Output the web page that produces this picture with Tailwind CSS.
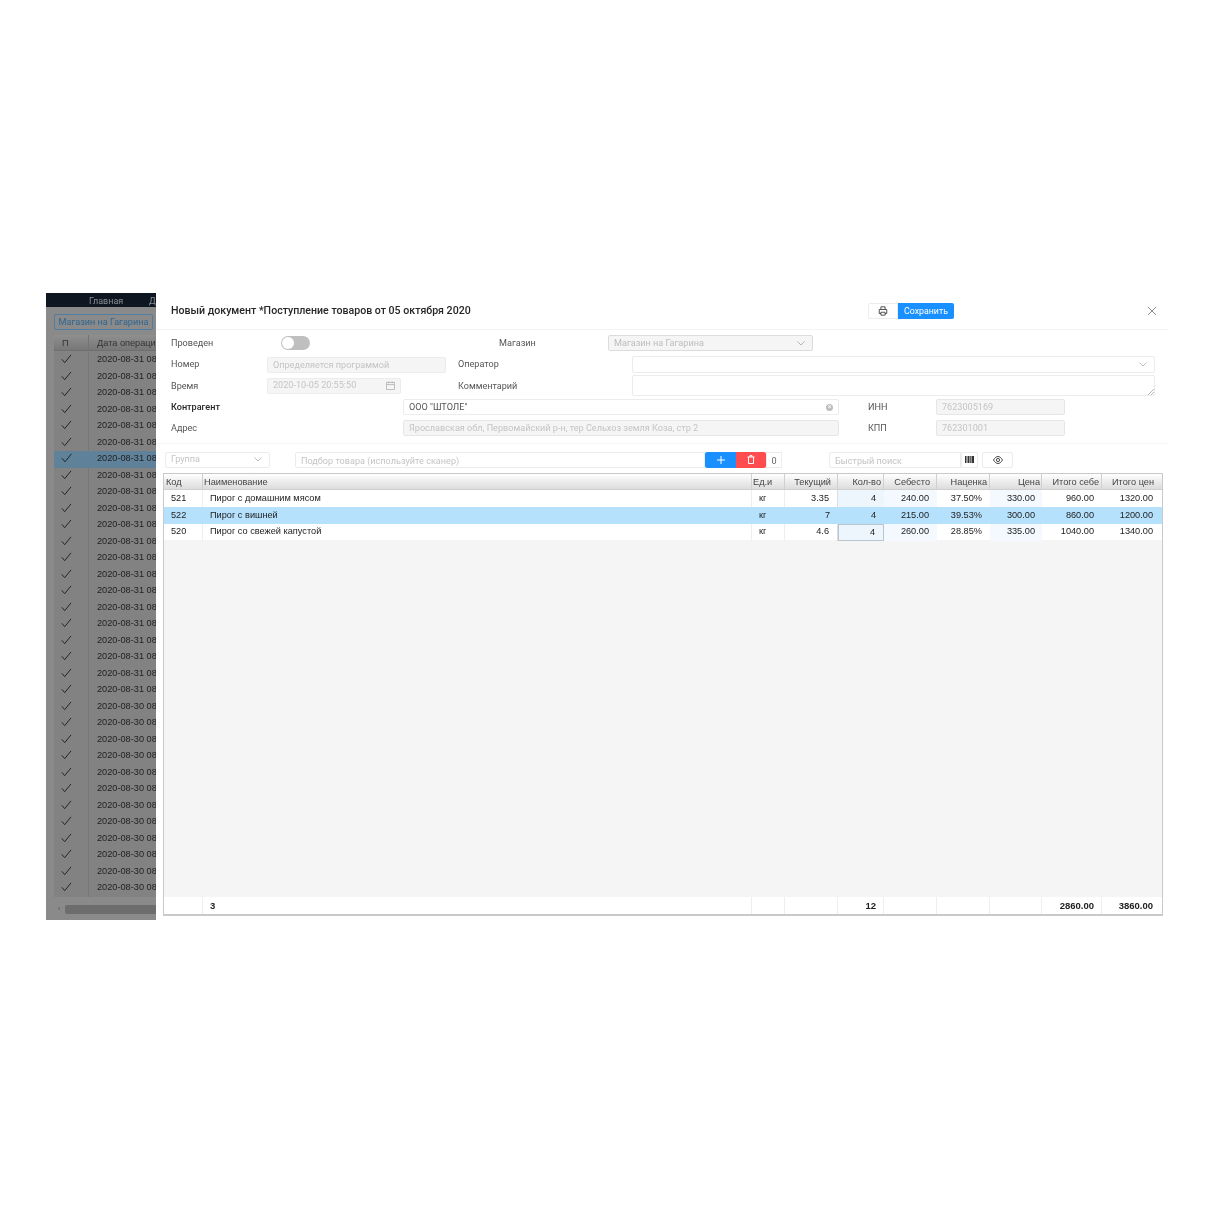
<!DOCTYPE html>
<html lang="ru">
<head>
<meta charset="utf-8">
<title>Новый документ</title>
<script src="https://cdn.jsdelivr.net/npm/@tailwindcss/browser@4"></script>
</head>
<body class="bg-white">
<div class="w-[1214px] h-[1214px] pt-[293px] pl-[46px] flex items-start overflow-hidden blur-[0.3px] font-['Liberation_Sans',sans-serif]">

<!-- dimmed page behind the dialog -->
<div class="relative w-[110px] h-[627px] bg-[#8a8a8a] overflow-hidden shrink-0">
  <div class="h-[14px] bg-[#0d1621] text-[9px] leading-[16px] text-[#8b8f94] font-['Roboto',sans-serif] flex">
    <span class="ml-[43px] w-[60px] shrink-0">Главная</span><span>Д</span>
  </div>
  <div class="mt-[7px] ml-[8px] w-[99px] h-[16px] rounded-[2px] border border-[#4f7da3] text-[#2f6690] text-[9.1px] leading-[14px] text-center font-['Roboto',sans-serif] whitespace-nowrap">Магазин на Гагарина</div>
  <div class="mt-[5px] ml-[8px] h-[16px] flex text-[9.2px] leading-[16px] text-[#333] bg-gradient-to-b from-[#8f8f8f] to-[#777] border-b border-[#6f6f6f]">
    <span class="w-[35px] shrink-0 pl-[8px] border-r border-[#747474]">П</span><span class="pl-[8px] whitespace-nowrap">Дата операции</span>
  </div>
  <div class="ml-[8px] pt-[1px] text-[9.2px] leading-[16.5px] text-[#222] bg-[#828282]">
    <div class="h-[16.5px] flex items-center"><svg class="w-[35px] h-[16.5px] shrink-0 border-r border-[#777]" viewBox="0 0 35 16" fill="none" stroke="#222" stroke-width="1"><path d="M8 7l3 3.500 6.500-8"/></svg><span class="pl-[8px] pb-[2px] whitespace-nowrap">2020-08-31 08:00:00</span></div>
    <div class="h-[16.5px] flex items-center"><svg class="w-[35px] h-[16.5px] shrink-0 border-r border-[#777]" viewBox="0 0 35 16" fill="none" stroke="#222" stroke-width="1"><path d="M8 7l3 3.500 6.500-8"/></svg><span class="pl-[8px] pb-[2px] whitespace-nowrap">2020-08-31 08:00:00</span></div>
    <div class="h-[16.5px] flex items-center"><svg class="w-[35px] h-[16.5px] shrink-0 border-r border-[#777]" viewBox="0 0 35 16" fill="none" stroke="#222" stroke-width="1"><path d="M8 7l3 3.500 6.500-8"/></svg><span class="pl-[8px] pb-[2px] whitespace-nowrap">2020-08-31 08:00:00</span></div>
    <div class="h-[16.5px] flex items-center"><svg class="w-[35px] h-[16.5px] shrink-0 border-r border-[#777]" viewBox="0 0 35 16" fill="none" stroke="#222" stroke-width="1"><path d="M8 7l3 3.500 6.500-8"/></svg><span class="pl-[8px] pb-[2px] whitespace-nowrap">2020-08-31 08:00:00</span></div>
    <div class="h-[16.5px] flex items-center"><svg class="w-[35px] h-[16.5px] shrink-0 border-r border-[#777]" viewBox="0 0 35 16" fill="none" stroke="#222" stroke-width="1"><path d="M8 7l3 3.500 6.500-8"/></svg><span class="pl-[8px] pb-[2px] whitespace-nowrap">2020-08-31 08:00:00</span></div>
    <div class="h-[16.5px] flex items-center"><svg class="w-[35px] h-[16.5px] shrink-0 border-r border-[#777]" viewBox="0 0 35 16" fill="none" stroke="#222" stroke-width="1"><path d="M8 7l3 3.500 6.500-8"/></svg><span class="pl-[8px] pb-[2px] whitespace-nowrap">2020-08-31 08:00:00</span></div>
    <div class="h-[16.5px] flex items-center bg-[#5f8199]"><svg class="w-[35px] h-[16.5px] shrink-0" viewBox="0 0 35 16" fill="none" stroke="#222" stroke-width="1"><path d="M8 7l3 3.500 6.500-8"/></svg><span class="pl-[8px] pb-[2px] whitespace-nowrap">2020-08-31 08:00:00</span></div>
    <div class="h-[16.5px] flex items-center"><svg class="w-[35px] h-[16.5px] shrink-0 border-r border-[#777]" viewBox="0 0 35 16" fill="none" stroke="#222" stroke-width="1"><path d="M8 7l3 3.500 6.500-8"/></svg><span class="pl-[8px] pb-[2px] whitespace-nowrap">2020-08-31 08:00:00</span></div>
    <div class="h-[16.5px] flex items-center"><svg class="w-[35px] h-[16.5px] shrink-0 border-r border-[#777]" viewBox="0 0 35 16" fill="none" stroke="#222" stroke-width="1"><path d="M8 7l3 3.500 6.500-8"/></svg><span class="pl-[8px] pb-[2px] whitespace-nowrap">2020-08-31 08:00:00</span></div>
    <div class="h-[16.5px] flex items-center"><svg class="w-[35px] h-[16.5px] shrink-0 border-r border-[#777]" viewBox="0 0 35 16" fill="none" stroke="#222" stroke-width="1"><path d="M8 7l3 3.500 6.500-8"/></svg><span class="pl-[8px] pb-[2px] whitespace-nowrap">2020-08-31 08:00:00</span></div>
    <div class="h-[16.5px] flex items-center"><svg class="w-[35px] h-[16.5px] shrink-0 border-r border-[#777]" viewBox="0 0 35 16" fill="none" stroke="#222" stroke-width="1"><path d="M8 7l3 3.500 6.500-8"/></svg><span class="pl-[8px] pb-[2px] whitespace-nowrap">2020-08-31 08:00:00</span></div>
    <div class="h-[16.5px] flex items-center"><svg class="w-[35px] h-[16.5px] shrink-0 border-r border-[#777]" viewBox="0 0 35 16" fill="none" stroke="#222" stroke-width="1"><path d="M8 7l3 3.500 6.500-8"/></svg><span class="pl-[8px] pb-[2px] whitespace-nowrap">2020-08-31 08:00:00</span></div>
    <div class="h-[16.5px] flex items-center"><svg class="w-[35px] h-[16.5px] shrink-0 border-r border-[#777]" viewBox="0 0 35 16" fill="none" stroke="#222" stroke-width="1"><path d="M8 7l3 3.500 6.500-8"/></svg><span class="pl-[8px] pb-[2px] whitespace-nowrap">2020-08-31 08:00:00</span></div>
    <div class="h-[16.5px] flex items-center"><svg class="w-[35px] h-[16.5px] shrink-0 border-r border-[#777]" viewBox="0 0 35 16" fill="none" stroke="#222" stroke-width="1"><path d="M8 7l3 3.500 6.500-8"/></svg><span class="pl-[8px] pb-[2px] whitespace-nowrap">2020-08-31 08:00:00</span></div>
    <div class="h-[16.5px] flex items-center"><svg class="w-[35px] h-[16.5px] shrink-0 border-r border-[#777]" viewBox="0 0 35 16" fill="none" stroke="#222" stroke-width="1"><path d="M8 7l3 3.500 6.500-8"/></svg><span class="pl-[8px] pb-[2px] whitespace-nowrap">2020-08-31 08:00:00</span></div>
    <div class="h-[16.5px] flex items-center"><svg class="w-[35px] h-[16.5px] shrink-0 border-r border-[#777]" viewBox="0 0 35 16" fill="none" stroke="#222" stroke-width="1"><path d="M8 7l3 3.500 6.500-8"/></svg><span class="pl-[8px] pb-[2px] whitespace-nowrap">2020-08-31 08:00:00</span></div>
    <div class="h-[16.5px] flex items-center"><svg class="w-[35px] h-[16.5px] shrink-0 border-r border-[#777]" viewBox="0 0 35 16" fill="none" stroke="#222" stroke-width="1"><path d="M8 7l3 3.500 6.500-8"/></svg><span class="pl-[8px] pb-[2px] whitespace-nowrap">2020-08-31 08:00:00</span></div>
    <div class="h-[16.5px] flex items-center"><svg class="w-[35px] h-[16.5px] shrink-0 border-r border-[#777]" viewBox="0 0 35 16" fill="none" stroke="#222" stroke-width="1"><path d="M8 7l3 3.500 6.500-8"/></svg><span class="pl-[8px] pb-[2px] whitespace-nowrap">2020-08-31 08:00:00</span></div>
    <div class="h-[16.5px] flex items-center"><svg class="w-[35px] h-[16.5px] shrink-0 border-r border-[#777]" viewBox="0 0 35 16" fill="none" stroke="#222" stroke-width="1"><path d="M8 7l3 3.500 6.500-8"/></svg><span class="pl-[8px] pb-[2px] whitespace-nowrap">2020-08-31 08:00:00</span></div>
    <div class="h-[16.5px] flex items-center"><svg class="w-[35px] h-[16.5px] shrink-0 border-r border-[#777]" viewBox="0 0 35 16" fill="none" stroke="#222" stroke-width="1"><path d="M8 7l3 3.500 6.500-8"/></svg><span class="pl-[8px] pb-[2px] whitespace-nowrap">2020-08-31 08:00:00</span></div>
    <div class="h-[16.5px] flex items-center"><svg class="w-[35px] h-[16.5px] shrink-0 border-r border-[#777]" viewBox="0 0 35 16" fill="none" stroke="#222" stroke-width="1"><path d="M8 7l3 3.500 6.500-8"/></svg><span class="pl-[8px] pb-[2px] whitespace-nowrap">2020-08-31 08:00:00</span></div>
    <div class="h-[16.5px] flex items-center"><svg class="w-[35px] h-[16.5px] shrink-0 border-r border-[#777]" viewBox="0 0 35 16" fill="none" stroke="#222" stroke-width="1"><path d="M8 7l3 3.500 6.500-8"/></svg><span class="pl-[8px] pb-[2px] whitespace-nowrap">2020-08-30 08:00:00</span></div>
    <div class="h-[16.5px] flex items-center"><svg class="w-[35px] h-[16.5px] shrink-0 border-r border-[#777]" viewBox="0 0 35 16" fill="none" stroke="#222" stroke-width="1"><path d="M8 7l3 3.500 6.500-8"/></svg><span class="pl-[8px] pb-[2px] whitespace-nowrap">2020-08-30 08:00:00</span></div>
    <div class="h-[16.5px] flex items-center"><svg class="w-[35px] h-[16.5px] shrink-0 border-r border-[#777]" viewBox="0 0 35 16" fill="none" stroke="#222" stroke-width="1"><path d="M8 7l3 3.500 6.500-8"/></svg><span class="pl-[8px] pb-[2px] whitespace-nowrap">2020-08-30 08:00:00</span></div>
    <div class="h-[16.5px] flex items-center"><svg class="w-[35px] h-[16.5px] shrink-0 border-r border-[#777]" viewBox="0 0 35 16" fill="none" stroke="#222" stroke-width="1"><path d="M8 7l3 3.500 6.500-8"/></svg><span class="pl-[8px] pb-[2px] whitespace-nowrap">2020-08-30 08:00:00</span></div>
    <div class="h-[16.5px] flex items-center"><svg class="w-[35px] h-[16.5px] shrink-0 border-r border-[#777]" viewBox="0 0 35 16" fill="none" stroke="#222" stroke-width="1"><path d="M8 7l3 3.500 6.500-8"/></svg><span class="pl-[8px] pb-[2px] whitespace-nowrap">2020-08-30 08:00:00</span></div>
    <div class="h-[16.5px] flex items-center"><svg class="w-[35px] h-[16.5px] shrink-0 border-r border-[#777]" viewBox="0 0 35 16" fill="none" stroke="#222" stroke-width="1"><path d="M8 7l3 3.500 6.500-8"/></svg><span class="pl-[8px] pb-[2px] whitespace-nowrap">2020-08-30 08:00:00</span></div>
    <div class="h-[16.5px] flex items-center"><svg class="w-[35px] h-[16.5px] shrink-0 border-r border-[#777]" viewBox="0 0 35 16" fill="none" stroke="#222" stroke-width="1"><path d="M8 7l3 3.500 6.500-8"/></svg><span class="pl-[8px] pb-[2px] whitespace-nowrap">2020-08-30 08:00:00</span></div>
    <div class="h-[16.5px] flex items-center"><svg class="w-[35px] h-[16.5px] shrink-0 border-r border-[#777]" viewBox="0 0 35 16" fill="none" stroke="#222" stroke-width="1"><path d="M8 7l3 3.500 6.500-8"/></svg><span class="pl-[8px] pb-[2px] whitespace-nowrap">2020-08-30 08:00:00</span></div>
    <div class="h-[16.5px] flex items-center"><svg class="w-[35px] h-[16.5px] shrink-0 border-r border-[#777]" viewBox="0 0 35 16" fill="none" stroke="#222" stroke-width="1"><path d="M8 7l3 3.500 6.500-8"/></svg><span class="pl-[8px] pb-[2px] whitespace-nowrap">2020-08-30 08:00:00</span></div>
    <div class="h-[16.5px] flex items-center"><svg class="w-[35px] h-[16.5px] shrink-0 border-r border-[#777]" viewBox="0 0 35 16" fill="none" stroke="#222" stroke-width="1"><path d="M8 7l3 3.500 6.500-8"/></svg><span class="pl-[8px] pb-[2px] whitespace-nowrap">2020-08-30 08:00:00</span></div>
    <div class="h-[16.5px] flex items-center"><svg class="w-[35px] h-[16.5px] shrink-0 border-r border-[#777]" viewBox="0 0 35 16" fill="none" stroke="#222" stroke-width="1"><path d="M8 7l3 3.500 6.500-8"/></svg><span class="pl-[8px] pb-[2px] whitespace-nowrap">2020-08-30 08:00:00</span></div>
    <div class="h-[16.5px] flex items-center"><svg class="w-[35px] h-[16.5px] shrink-0 border-r border-[#777]" viewBox="0 0 35 16" fill="none" stroke="#222" stroke-width="1"><path d="M8 7l3 3.500 6.500-8"/></svg><span class="pl-[8px] pb-[2px] whitespace-nowrap">2020-08-30 08:00:00</span></div>
  </div>
  <div class="absolute left-[8px] right-0 top-[611px] h-[16px] bg-[#8a8a8a]">
    <div class="h-[10px] flex items-center">
      <span class="w-[11px] pl-[4px] text-[7px] leading-[10px] text-[#555]">‹</span>
      <span class="h-[9px] flex-1 bg-[#6d6d6d] rounded-l-[2px]"></span>
    </div>
  </div>
</div>

<!-- dialog -->
<div class="w-[1012px] h-[640px] bg-white text-[9.1px] text-[#555] font-['Roboto',sans-serif]">
  <div class="h-[37px] flex items-center border-b border-[#f4f4f4] pl-[15px]">
    <span class="w-[697px] text-[10.6px] font-medium text-[#262626] whitespace-nowrap">Новый документ *Поступление товаров от 05 октября 2020</span>
    <span class="w-[30px] h-[16px] border border-[#ececec] rounded-l-[2px] flex items-center justify-center">
      <svg class="w-[10px] h-[10px]" viewBox="0 0 12 12" fill="none" stroke="#333" stroke-width="1"><path d="M3.500 4V1h5v3M3.500 9H1.500V4.200h9V9H8.500"/><path d="M3.500 7.500h5v3.500h-5z"/></svg>
    </span>
    <span class="w-[56px] h-[16px] bg-[#1890ff] rounded-r-[2px] text-white text-[8.8px] text-center leading-[17px]">Сохранить</span>
    <svg class="ml-[193px] w-[10px] h-[10px]" viewBox="0 0 10 10" stroke="#8c8c8c" stroke-width="1" fill="none"><path d="M1 1l8 8M9 1l-8 8"/></svg>
  </div>

  <div class="h-[114px] pt-[5px] border-b border-[#f6f6f6] relative">
    <div class="h-[16px] flex items-center">
      <span class="ml-[15px] w-[110px] pt-[2px]">Проведен</span>
      <span class="w-[29px] h-[14px] rounded-full bg-[#bfbfbf] p-[1px] flex"><span class="w-[12px] h-[12px] rounded-full bg-white"></span></span>
      <span class="ml-[189px] w-[109px] pt-[2px] text-[#555]">Магазин</span>
      <span class="w-[205px] h-[16px] rounded-[2px] border border-[#dcdcdc] bg-[#f5f5f5] pl-[5px] pr-[7px] flex items-center justify-between text-[#bdbdbd] leading-[15px]">Магазин на Гагарина<svg class="w-[8px] h-[5px]" viewBox="0 0 8 5" fill="none" stroke="#b5b5b5"><path d="M.5.5L4 4 7.500.5"/></svg></span>
    </div>
    <div class="mt-[5px] h-[17px] flex items-center">
      <span class="ml-[15px] w-[96px] pt-[1px]">Номер</span>
      <span class="w-[179px] h-[16px] rounded-[2px] border border-[#ececec] bg-[#f5f5f5] pl-[5px] text-[#c4c4c4] leading-[14px]">Определяется программой</span>
      <span class="ml-[12px] w-[174px] pt-[1px]">Оператор</span>
      <span class="w-[523px] h-[17px] rounded-[2px] border border-[#ececec] pr-[7px] flex items-center justify-end"><svg class="w-[8px] h-[5px]" viewBox="0 0 8 5" fill="none" stroke="#bdbdbd"><path d="M.5.5L4 4 7.500.5"/></svg></span>
    </div>
    <div class="mt-[2px] h-[21px] flex items-center">
      <span class="ml-[15px] w-[96px] pt-[2px]">Время</span>
      <span class="w-[134px] h-[16px] rounded-[2px] border border-[#ececec] bg-[#f5f5f5] pl-[5px] pr-[5px] flex items-center justify-between text-[#c4c4c4]">2020-10-05 20:55:50<svg class="w-[9px] h-[9px]" viewBox="0 0 10 10" fill="none" stroke="#b5b5b5"><path d="M.5 1.500h9v8h-9zM.5 4h9M3 .5v2M7 .5v2"/></svg></span>
      <span class="ml-[57px] w-[174px] pt-[2px]">Комментарий</span>
      <span class="relative w-[523px] h-[21px] rounded-[2px] border border-[#ececec]"><svg class="absolute right-0 bottom-0 w-[7px] h-[7px]" viewBox="0 0 7 7" stroke="#999" stroke-width=".7"><path d="M1 7l6-6M4 7l3-3"/></svg></span>
    </div>
    <div class="mt-[3px] h-[16px] flex items-center">
      <span class="ml-[15px] w-[232px] pt-[2px] text-[#262626] font-medium">Контрагент</span>
      <span class="w-[436px] h-[16px] rounded-[2px] border border-[#ececec] pl-[5px] pr-[5px] flex items-center justify-between text-[#555] leading-[15px]"><span class="pt-[1px]">ООО "ШТОЛЕ"</span><span class="w-[7px] h-[7px] rounded-full bg-[#bdbdbd] text-white text-[7px] leading-[7px] text-center">×</span></span>
      <span class="ml-[29px] w-[68px] pt-[2px]">ИНН</span>
      <span class="w-[129px] h-[16px] rounded-[2px] border border-[#e6e6e6] bg-[#f5f5f5] pl-[5px] text-[#c4c4c4] leading-[14px]">7623005169</span>
    </div>
    <div class="mt-[5px] h-[16px] flex items-center">
      <span class="ml-[15px] w-[232px] pt-[2px]">Адрес</span>
      <span class="w-[436px] h-[16px] rounded-[2px] border border-[#e6e6e6] bg-[#f5f5f5] pl-[5px] text-[#c4c4c4] leading-[14px] whitespace-nowrap">Ярославская обл, Первомайский р-н, тер Сельхоз земля Коза, стр 2</span>
      <span class="ml-[29px] w-[68px] pt-[2px]">КПП</span>
      <span class="w-[129px] h-[16px] rounded-[2px] border border-[#e6e6e6] bg-[#f5f5f5] pl-[5px] text-[#c4c4c4] leading-[14px]">762301001</span>
    </div>
  </div>

  <div class="mt-[7px] h-[17px] flex items-center pl-[9px] text-[#c4c4c4]">
    <span class="w-[105px] h-[16px] rounded-[2px] border border-[#ececec] pl-[5px] pr-[7px] flex items-center justify-between leading-[17px]"><span>Группа</span><svg class="w-[8px] h-[5px]" viewBox="0 0 8 5" fill="none" stroke="#bdbdbd"><path d="M.5.5L4 4 7.500.5"/></svg></span>
    <span class="ml-[25px] w-[410px] h-[16px] rounded-l-[2px] border border-[#ececec] pl-[5px] leading-[17px]">Подбор товара (используйте сканер)</span>
    <span class="w-[31px] h-[16px] bg-[#1890ff] rounded-l-[2px] flex items-center justify-center"><svg class="w-[8px] h-[8px]" viewBox="0 0 8 8" stroke="#fff"><path d="M4 0v8M0 4h8"/></svg></span>
    <span class="w-[30px] h-[16px] bg-[#ff4d4f] rounded-r-[2px] flex items-center justify-center"><svg class="w-[8px] h-[9px]" viewBox="0 0 8 9" fill="none" stroke="#fff"><path d="M.5 2h7M1.500 2v6.500h5V2M3 2V.5h2V2"/></svg></span>
    <span class="w-[16px] h-[16px] border border-[#ececec] text-[#666] text-center leading-[16px]">0</span>
    <span class="ml-[47px] w-[132px] h-[16px] rounded-l-[2px] border border-[#ececec] pl-[5px] leading-[17px]">Быстрый поиск</span>
    <span class="w-[17px] h-[16px] border border-[#ececec] flex items-center justify-center"><svg class="w-[9px] h-[7px]" viewBox="0 0 9 7" stroke="#333"><path d="M.5 0v7M2 0v7M3.500 0v7M5 0v7M6 0v7M7.500 0v7M8.500 0v7"/></svg></span>
    <span class="ml-[4px] w-[31px] h-[16px] rounded-[2px] border border-[#ececec] flex items-center justify-center"><svg class="w-[10px] h-[8px]" viewBox="0 0 10 8" fill="none" stroke="#333" stroke-width=".9"><path d="M.5 4C2 1.500 3.500.5 5 .5S8 1.500 9.500 4C8 6.500 6.500 7.500 5 7.500S2 6.500.5 4z"/><circle cx="5" cy="4" r="1.600"/></svg></span>
  </div>

  <div class="mt-[5px] ml-[7px] w-[1000px] h-[443px] border border-[#c9c9c9] border-b-2 bg-[#f5f5f5] flex flex-col justify-between font-['Liberation_Sans',sans-serif] text-[9.2px] text-[#222]">
    <div>
      <div class="h-[16px] grid grid-cols-[39px_549px_33px_53px_46px_53px_53px_52px_60px_60px] bg-gradient-to-b from-white to-[#dcdcdc] border-b border-[#cfcfcf] leading-[16px] text-[#444] whitespace-nowrap">
        <span class="pl-[2px] border-r border-[#d0d0d0]">Код</span>
        <span class="pl-[1px] border-r border-[#d0d0d0]">Наименование</span>
        <span class="pl-[1px] border-r border-[#d0d0d0]">Ед.и</span>
        <span class="pr-[6px] text-right border-r border-[#d0d0d0]">Текущий</span>
        <span class="pr-[2px] text-right border-r border-[#d0d0d0]">Кол-во</span>
        <span class="pr-[6px] text-right border-r border-[#d0d0d0]">Себесто</span>
        <span class="pr-[2px] text-right border-r border-[#d0d0d0]">Наценка</span>
        <span class="pr-[1px] text-right border-r border-[#d0d0d0]">Цена</span>
        <span class="pr-[2px] text-right border-r border-[#d0d0d0]">Итого себе</span>
        <span class="pr-[8px] text-right">Итого цен</span>
      </div>
      <div class="h-[17px] grid grid-cols-[39px_549px_33px_53px_46px_53px_53px_52px_60px_60px] bg-white leading-[16px]">
        <span class="pl-[7px] border-r border-[#eee]">521</span>
        <span class="pl-[7px] border-r border-[#eee]">Пирог с домашним мясом</span>
        <span class="pl-[7px] border-r border-[#eee]">кг</span>
        <span class="pr-[8px] text-right border-r border-[#ddd]">3.35</span>
        <span class="pr-[8px] text-right bg-[#eef6fd]">4</span>
        <span class="pr-[8px] text-right bg-[#f3f9fe]">240.00</span>
        <span class="pr-[8px] text-right">37.50%</span>
        <span class="pr-[7px] text-right bg-[#f3f9fe]">330.00</span>
        <span class="pr-[8px] text-right">960.00</span>
        <span class="pr-[9px] text-right">1320.00</span>
      </div>
      <div class="h-[16.500px] grid grid-cols-[39px_549px_33px_53px_46px_53px_53px_52px_60px_60px] bg-[#b6e1fd] leading-[16px]">
        <span class="pl-[7px]">522</span>
        <span class="pl-[7px]">Пирог с вишней</span>
        <span class="pl-[7px]">кг</span>
        <span class="pr-[8px] text-right">7</span>
        <span class="pr-[8px] text-right">4</span>
        <span class="pr-[8px] text-right">215.00</span>
        <span class="pr-[8px] text-right">39.53%</span>
        <span class="pr-[7px] text-right">300.00</span>
        <span class="pr-[8px] text-right">860.00</span>
        <span class="pr-[9px] text-right">1200.00</span>
      </div>
      <div class="h-[16.500px] grid grid-cols-[39px_549px_33px_53px_46px_53px_53px_52px_60px_60px] bg-white leading-[14px]">
        <span class="pl-[7px] border-r border-[#eee]">520</span>
        <span class="pl-[7px] border-r border-[#eee]">Пирог со свежей капустой</span>
        <span class="pl-[7px] border-r border-[#eee]">кг</span>
        <span class="pr-[8px] text-right border-r border-[#ddd]">4.6</span>
        <span class="pr-[8px] text-right bg-[#eef6fd] border border-[#b9c4cc] leading-[15px]">4</span>
        <span class="pr-[8px] text-right bg-[#f3f9fe]">260.00</span>
        <span class="pr-[8px] text-right">28.85%</span>
        <span class="pr-[7px] text-right bg-[#f3f9fe]">335.00</span>
        <span class="pr-[8px] text-right">1040.00</span>
        <span class="pr-[9px] text-right">1340.00</span>
      </div>
    </div>
    <div class="h-[17px] grid grid-cols-[39px_549px_33px_53px_46px_53px_53px_52px_60px_60px] bg-white leading-[17px] font-bold text-[9.5px] text-[#222]">
      <span class="border-r border-[#eee]"></span>
      <span class="pl-[7px] border-r border-[#eee]">3</span>
      <span class="border-r border-[#eee]"></span>
      <span class="border-r border-[#eee]"></span>
      <span class="pr-[7px] text-right border-r border-[#eee]">12</span>
      <span class="border-r border-[#eee]"></span>
      <span class="border-r border-[#eee]"></span>
      <span class="border-r border-[#eee]"></span>
      <span class="pr-[7px] text-right border-r border-[#eee]">2860.00</span>
      <span class="pr-[9px] text-right">3860.00</span>
    </div>
  </div>
</div>
</div>
</body>
</html>
